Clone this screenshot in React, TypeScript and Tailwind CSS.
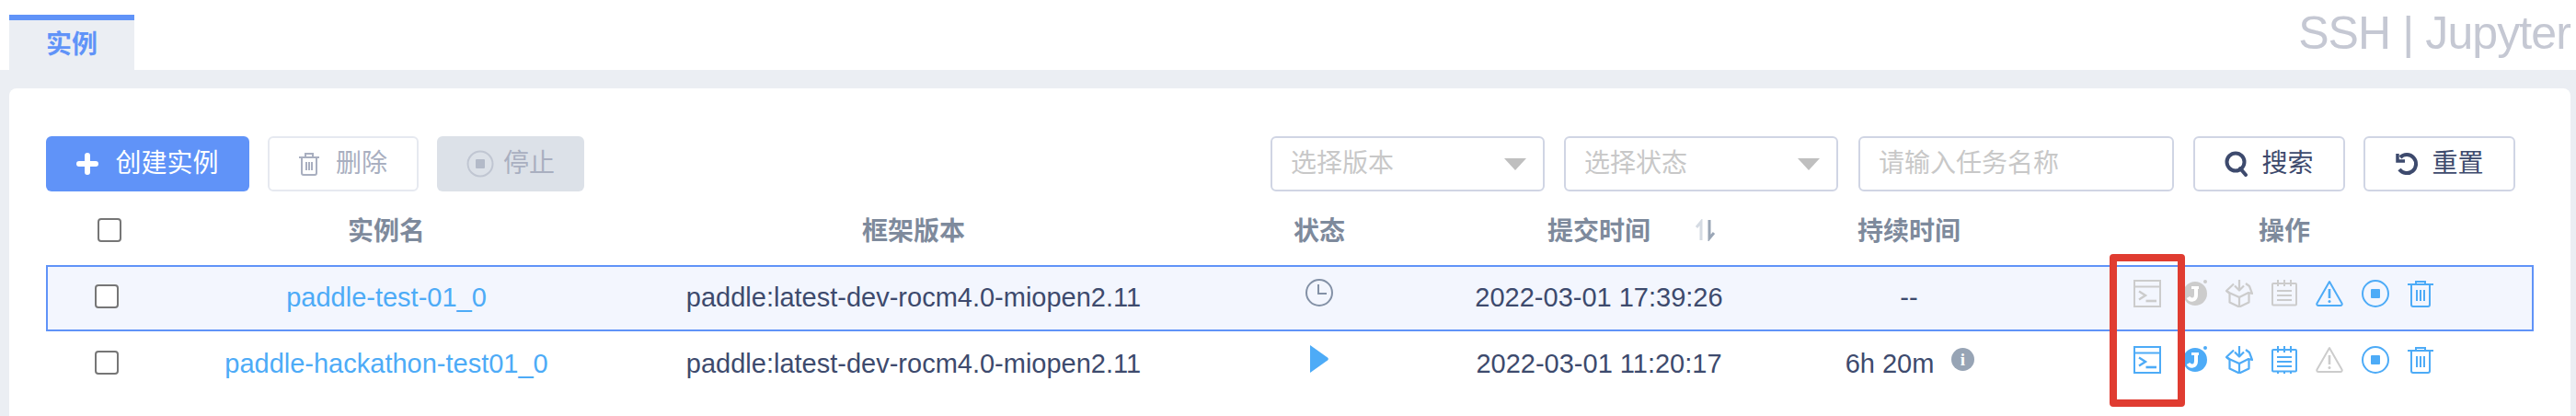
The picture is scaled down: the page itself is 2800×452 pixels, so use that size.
const GRID = "grid grid-cols-[134px_472px_674px_208px_400px_274px_1fr] items-center";

function Terminal({ c }: { c: string }) {
  return (
    <svg width="30" height="30" viewBox="0 0 30 30" fill="none" stroke={c} strokeWidth="2">
      <rect x="1" y="1" width="28" height="28" />
      <path d="M1 7.5H29" />
      <path d="M6 12.5l7 4.5-7 4.5" strokeWidth="2.4" />
      <path d="M13.5 23H25" strokeWidth="2.6" />
    </svg>
  );
}
function Jup({ c }: { c: string }) {
  return (
    <svg width="26" height="30" viewBox="0 0 26 30" className="block ml-[4px]">
      <circle cx="13" cy="15" r="13" fill={c} />
      <circle cx="24" cy="2" r="2" fill={c} />
      <path d="M5.5 19c2 4 8.5 3.500 8.500-2.500V8" fill="none" stroke="#fff" strokeWidth="4" />
      <path d="M9 8.500h8" stroke="#fff" strokeWidth="3" />
    </svg>
  );
}
function BoxI({ c }: { c: string }) {
  return (
    <svg width="30" height="30" viewBox="0 0 30 30" fill="none" stroke={c} strokeWidth="2.2" strokeLinejoin="round">
      <path d="M15 0v11M10 6.500l5 5 5-5" />
      <path d="M9 4.500L1 12l4 2.500L15 19l10-5 4 1-3-8-4-3" />
      <path d="M1 12l3.500 3v9.500L15 29.500l10.500-5V14" />
      <path d="M15 19v10.500" />
    </svg>
  );
}
function Notes({ c, ticks }: { c: string; ticks?: boolean }) {
  return (
    <svg width="28" height="30" viewBox="0 0 28 30" fill="none" stroke={c} strokeWidth="2">
      <rect x="1" y="4" width="26" height="23.500" rx="1" />
      <path d="M7 0v7M14 0v7M21 0v7" />
      {ticks && <path d="M7 27v3M14 27v3M21 27v3" />}
      <path d="M6 12h16M6 17h16M6 22h16" />
    </svg>
  );
}
function Warn({ c }: { c: string }) {
  return (
    <svg width="30" height="30" viewBox="0 0 30 30" fill="none" stroke={c} strokeWidth="2" strokeLinejoin="round">
      <path d="M15 2L1.500 25.500c-.6 1.200.2 2.500 1.600 2.500h23.800c1.400 0 2.200-1.300 1.600-2.500z" />
      <path d="M15 10v10" strokeWidth="2.600" />
      <circle cx="15" cy="23.500" r="1.500" fill={c} stroke="none" />
    </svg>
  );
}
function StopI({ c }: { c: string }) {
  return (
    <svg width="30" height="30" viewBox="0 0 30 30" fill="none">
      <circle cx="15" cy="15" r="14" stroke={c} strokeWidth="2" />
      <rect x="10" y="10" width="10" height="10" rx="1" fill={c} />
    </svg>
  );
}
function Trash({ c }: { c: string }) {
  return (
    <svg width="28" height="30" viewBox="0 0 28 30" fill="none" stroke={c} strokeWidth="2">
      <path d="M0 5h28" />
      <path d="M9 5V2h10v3" />
      <path d="M4 5v22a2 2 0 002 2h16a2 2 0 002-2V5" />
      <path d="M10 11v12M14 11v12M18 11v12" />
    </svg>
  );
}

const BLUE = "#4dabf7";
const GRAY = "#cccccc";

function Check() {
  return <div className="w-[26px] h-[26px] rounded-[4px] border-2 border-[#767676] bg-white" />;
}

function Row({ name, time, dur, status, info, first, icons }: any) {
  return (
    <div className={`${GRID} h-[72px] text-[29px] ${first ? "ring-2 ring-inset ring-[#6093f8] bg-[#f3f6fe]" : ""}`}>
      <div className="flex justify-center pr-[2px] mb-[4px]"><Check /></div>
      <div className="text-center text-[#4dabf7]">{name}</div>
      <div className="text-center">paddle:latest-dev-rocm4.0-miopen2.11</div>
      <div className="flex justify-center mb-[12px]">{status}</div>
      <div className="text-center">{time}</div>
      <div className={`flex justify-center items-center relative ${info ? "pr-[42px]" : ""}`}>
        {dur}
        {info && (
          <span className="absolute left-[183px] top-[4px] w-[25px] h-[25px] rounded-full bg-[#97a4b5] text-white text-[19px] font-bold flex items-center justify-center font-['Liberation_Serif',serif]">i</span>
        )}
      </div>
      <div className="flex justify-center items-center gap-[20px] pr-[2px] mb-[10px]">{icons}</div>
    </div>
  );
}

export default function App() {
  return (
    <div className="w-[2800px] h-[452px] overflow-hidden relative bg-white text-[#3d4a6d] text-[28px] font-['Liberation_Sans','Noto_Sans_CJK_SC',sans-serif]">
      <div className="h-[76px] flex justify-between pl-[10px] pr-[6px]">
        <div className="mt-[16px] w-[136px] h-[60px] bg-[#ebeef3] border-t-[6px] border-[#6093f8] flex items-center justify-center text-[#6093f8] font-bold">实例</div>
        <div className="text-[50px] leading-none mt-[11px] tracking-[-0.9px] text-[#c5c8d3] whitespace-nowrap">SSH | Jupyter</div>
      </div>
      <div className="h-[376px] bg-[#ebeef3] pt-[20px] px-[10px] pr-[6px]">
        <div className="h-full bg-white rounded-t-[8px] pt-[52px] pl-[40px] pr-[40px]">
          <div className="flex items-center h-[60px]">
            <div className="w-[221px] h-[60px] rounded-[6px] bg-[#6093f8] text-white flex items-center justify-center gap-[18px]">
              <svg width="24" height="24" viewBox="0 0 24 24"><path d="M12 3v18M3 12h18" stroke="#fff" strokeWidth="6" strokeLinecap="round" /></svg>
              创建实例
            </div>
            <div className="ml-[20px] w-[164px] h-[60px] rounded-[6px] border-2 border-[#e6e9f0] text-[#a9afc0] flex items-center justify-center gap-[18px]">
              <svg width="22" height="26" viewBox="0 0 22 26" fill="none" stroke="#a9afc0" strokeWidth="2"><path d="M0 6h22M7 6V2h8v4M3 6v17a2 2 0 002 2h12a2 2 0 002-2V6" /><path d="M8 11v9M11 11v9M14 11v9" /></svg>
              删除
            </div>
            <div className="ml-[20px] w-[160px] h-[60px] rounded-[6px] bg-[#dce1e8] text-[#a9afc0] flex items-center justify-center gap-[10px]">
              <svg width="30" height="30" viewBox="0 0 30 30" fill="none"><circle cx="15" cy="15" r="13.500" stroke="#c0c6d2" strokeWidth="2" /><rect x="10" y="10" width="10" height="10" rx="1" fill="#b3bac8" /></svg>
              停止
            </div>
            <div className="ml-auto mr-[20px] flex items-center">
              <div className="w-[298px] h-[60px] rounded-[6px] border-2 border-[#d0d5e4] flex items-center justify-between pl-[20px] pr-[18px] text-[#c8c8c8]">
                选择版本
                <span className="w-0 h-0 border-x-[12px] border-x-transparent border-t-[13px] border-t-[#bfbfbf]" />
              </div>
              <div className="ml-[21px] w-[298px] h-[60px] rounded-[6px] border-2 border-[#d0d5e4] flex items-center justify-between pl-[20px] pr-[18px] text-[#c8c8c8]">
                选择状态
                <span className="w-0 h-0 border-x-[12px] border-x-transparent border-t-[13px] border-t-[#bfbfbf]" />
              </div>
              <div className="ml-[22px] w-[343px] h-[60px] rounded-[6px] border-2 border-[#d0d5e4] flex items-center pl-[20px] text-[#c8c8c8]">请输入任务名称</div>
              <div className="ml-[21px] w-[165px] h-[60px] rounded-[6px] border-2 border-[#d0d5e4] flex items-center justify-center gap-[14px]">
                <svg width="26" height="28" viewBox="0 0 26 28" fill="none" stroke="#3d4a6d" strokeWidth="4"><circle cx="12" cy="12" r="9.500" /><path d="M17 19l6 7" strokeLinecap="round" /></svg>
                搜索
              </div>
              <div className="ml-[20px] w-[165px] h-[60px] rounded-[6px] border-2 border-[#d0d5e4] flex items-center justify-center gap-[14px]">
                <svg width="26" height="26" viewBox="0 0 26 26" fill="none" stroke="#3d4a6d" strokeWidth="4"><path d="M6 6a10 10 0 11-1 13" /><path d="M3 2v8h8" strokeWidth="3.500" /></svg>
                重置
              </div>
            </div>
          </div>
          <div className={`${GRID} h-[80px] pt-[4px] text-[#7e8a9c] font-bold`}>
            <div className="flex justify-center pl-[3px]"><Check /></div>
            <div className="text-center pt-[3px]">实例名</div>
            <div className="text-center pt-[3px]">框架版本</div>
            <div className="text-center pt-[3px]">状态</div>
            <div className="text-center pt-[3px] relative">
              提交时间
              <svg className="absolute left-[302px] top-[10px]" width="26" height="24" viewBox="0 0 26 24" fill="none" strokeWidth="3">
                <path d="M9 23V3L4 9" stroke="#d5dbe3" />
                <path d="M18 1v20l5-6" stroke="#9aa6b6" />
              </svg>
            </div>
            <div className="text-center pt-[3px]">持续时间</div>
            <div className="text-center pt-[3px]">操作</div>
          </div>
          <Row
            first
            name="paddle-test-01_0"
            time="2022-03-01 17:39:26"
            dur="--"
            status={
              <svg width="30" height="30" viewBox="0 0 30 30" fill="none" stroke="#8391a6" strokeWidth="2"><circle cx="15" cy="15" r="14" /><path d="M14 6v10h9" /></svg>
            }
            icons={
              <>
                <Terminal c={GRAY} /><Jup c={GRAY} /><BoxI c={GRAY} /><Notes c={GRAY} /><Warn c={BLUE} /><StopI c={BLUE} /><Trash c={BLUE} />
              </>
            }
          />
          <Row
            name="paddle-hackathon-test01_0"
            time="2022-03-01 11:20:17"
            dur="6h 20m"
            info
            status={
              <svg width="20" height="30" viewBox="0 0 20 30"><path d="M0 0l19 13.500a2 2 0 010 3L0 30z" fill="#4dabf7" /></svg>
            }
            icons={
              <>
                <Terminal c={BLUE} /><Jup c={BLUE} /><BoxI c={BLUE} /><Notes c={BLUE} ticks /><Warn c={GRAY} /><StopI c={BLUE} /><Trash c={BLUE} />
              </>
            }
          />
        </div>
      </div>
      <div className="absolute left-[2293px] top-[276px] w-[82px] h-[166px] border-[8px] border-[#e03c31] rounded-[4px]" />
    </div>
  );
}
